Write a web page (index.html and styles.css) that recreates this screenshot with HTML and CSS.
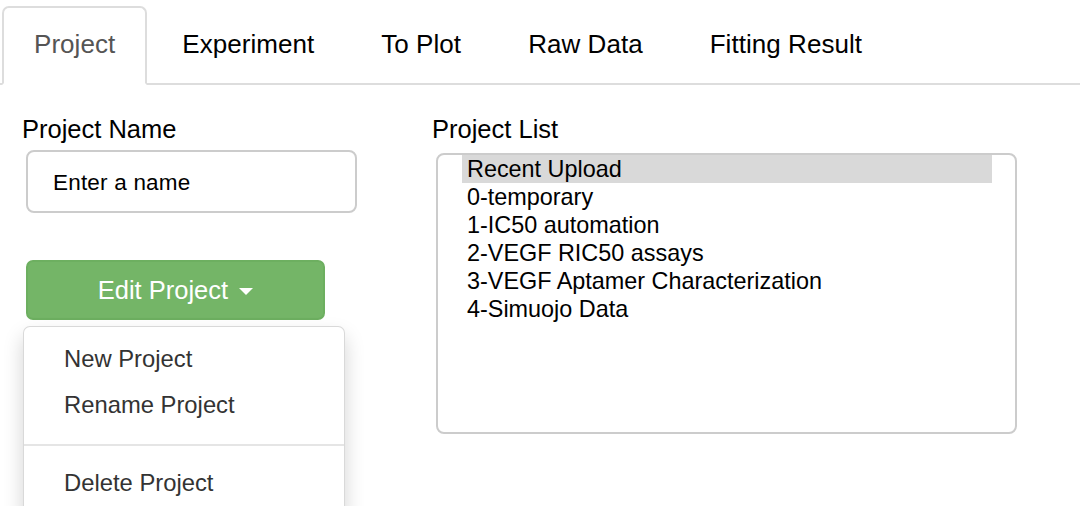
FILE: index.html
```html
<!DOCTYPE html>
<html lang="en">
<head>
<meta charset="utf-8">
<title>Project</title>
<link rel="stylesheet" href="styles.css">
</head>
<body>
<ul class="tabs">
  <li class="tab active"><a>Project</a></li>
  <li class="tab"><a>Experiment</a></li>
  <li class="tab"><a>To Plot</a></li>
  <li class="tab"><a>Raw Data</a></li>
  <li class="tab"><a>Fitting Result</a></li>
</ul>
<div class="content">
  <div class="col-left">
    <label class="field-label" for="pname">Project Name</label>
    <input id="pname" class="text-input" type="text" value="Enter a name">
    <div class="btn-group">
      <button class="btn-edit" type="button">Edit Project <span class="caret"></span></button>
      <ul class="menu">
        <li class="menu-item">New Project</li>
        <li class="menu-item">Rename Project</li>
        <li class="menu-divider"></li>
        <li class="menu-item">Delete Project</li>
      </ul>
    </div>
  </div>
  <div class="col-right">
    <label class="field-label">Project List</label>
    <div class="listbox">
      <div class="opt selected">Recent Upload</div>
      <div class="opt">0-temporary</div>
      <div class="opt">1-IC50 automation</div>
      <div class="opt">2-VEGF RIC50 assays</div>
      <div class="opt">3-VEGF Aptamer Characterization</div>
      <div class="opt">4-Simuojo Data</div>
    </div>
  </div>
</div>
</body>
</html>
```
FILE: styles.css
```css
html, body {
  margin: 0;
  padding: 0;
  height: 100%;
  overflow: hidden;
  background: #fff;
}
body {
  font-family: "Liberation Sans", Arial, Helvetica, sans-serif;
  color: #000;
}
.tabs {
  display: flex;
  list-style: none;
  margin: 0;
  padding: 6px 0 0 2px;
  border-bottom: 2px solid #ddd;
}
.tab {
  margin-right: 3px;
  margin-bottom: -2px;
}
.tab a {
  display: block;
  padding: 18px 30px 21px;
  line-height: 36px;
  font-size: 26px;
  letter-spacing: 0.05px;
  color: #000;
  border: 2px solid transparent;
  border-radius: 7px 7px 0 0;
}
.tab.active a {
  color: #555;
  background: #fff;
  border-color: #ddd;
  border-bottom-color: transparent;
}
.content {
  display: flex;
  padding: 29px 0 0 22px;
}
.col-left {
  width: 410px;
}
.field-label {
  display: block;
  font-size: 25.5px;
  line-height: 30px;
  color: #000;
}
.text-input {
  display: block;
  box-sizing: border-box;
  margin: 6px 0 0 4px;
  width: 331px;
  height: 63px;
  padding: 2px 25px 0;
  border: 2px solid #ccc;
  border-radius: 8px;
  font-family: "Liberation Sans", Arial, sans-serif;
  font-size: 22.5px;
  letter-spacing: 0.2px;
  color: #000;
  background: #fff;
  outline: none;
}
.btn-group {
  position: relative;
  margin: 47px 0 0 4px;
  width: 299px;
}
.btn-edit {
  display: block;
  box-sizing: border-box;
  width: 299px;
  height: 60px;
  background: #74b567;
  border: 2px solid #6daf60;
  border-radius: 7px;
  color: #fff;
  font-family: "Liberation Sans", Arial, sans-serif;
  font-size: 25.5px;
  padding: 0;
}
.caret {
  display: inline-block;
  width: 0;
  height: 0;
  margin-left: 4px;
  vertical-align: middle;
  border-top: 7px solid #fff;
  border-left: 7px solid transparent;
  border-right: 7px solid transparent;
}
.menu {
  position: absolute;
  top: 66px;
  left: -3px;
  box-sizing: border-box;
  width: 322px;
  margin: 0;
  padding: 8.5px 0;
  list-style: none;
  background: #fff;
  border: 1.5px solid rgba(0, 0, 0, 0.15);
  border-radius: 7px;
  box-shadow: 0 10px 20px rgba(0, 0, 0, 0.175);
}
.menu-item {
  padding: 6px 40px;
  line-height: 34px;
  font-size: 23.8px;
  color: #333;
  white-space: nowrap;
}
.menu-divider {
  height: 2px;
  background: #e5e5e5;
  margin: 16px 0 14px;
}
.listbox {
  box-sizing: border-box;
  margin: 9px 0 0 4px;
  width: 581px;
  height: 281px;
  padding: 0 23px 0 24px;
  border: 2px solid #ccc;
  border-radius: 8px;
  background: #fff;
}
.opt {
  padding: 0 5px;
  font-size: 23.4px;
  line-height: 28px;
  color: #000;
  white-space: nowrap;
}
.opt.selected {
  background: #d9d9d9;
}
```
